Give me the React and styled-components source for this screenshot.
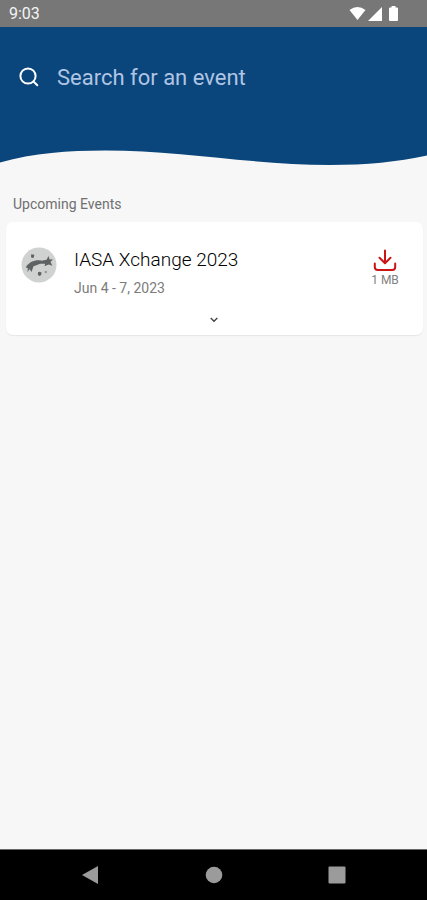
import React from "react";
import styled, { createGlobalStyle } from "styled-components";

const GlobalStyle = createGlobalStyle`
  *, *::before, *::after { box-sizing: border-box; }
  body {
    margin: 0;
    background: #f7f7f7;
    font-family: Roboto, "Liberation Sans", sans-serif;
  }
  button {
    font: inherit;
    border: 0;
    padding: 0;
    background: none;
    cursor: pointer;
  }
  svg { display: block; flex: none; }
`;

const Screen = styled.div`
  min-height: 100vh;
  display: flex;
  flex-direction: column;
`;

const StatusBar = styled.div`
  height: 27px;
  padding: 0 27px 0 9px;
  display: flex;
  align-items: center;
  justify-content: space-between;
  background: #777777;
  color: #f4f4f4;
  font-size: 16px;
  line-height: 27px;
`;

const StatusIcons = styled.div`
  display: flex;
  align-items: center;
  gap: 2px;
`;

const Header = styled.header`
  background: #0a467b;
`;

const SearchField = styled.label`
  height: 100px;
  padding: 0 19px;
  display: flex;
  align-items: center;
  gap: 18px;
  color: #ffffff;
`;

const SearchInput = styled.input`
  flex: 1;
  min-width: 0;
  height: 40px;
  padding: 0;
  border: 0;
  outline: 0;
  background: transparent;
  color: #ffffff;
  font-family: inherit;
  font-size: 22px;
  &::placeholder {
    color: #b0c5e4;
    opacity: 1;
  }
`;

const Wave = styled.svg`
  width: 100%;
  height: 42px;
`;

const Main = styled.main`
  flex: 1;
  padding: 26px 4px 20px 6px;
`;

const SectionTitle = styled.h2`
  margin: 0 0 9px;
  padding-left: 7px;
  color: #707070;
  font-size: 14px;
  font-weight: 400;
  line-height: 18px;
`;

const Card = styled.article`
  padding: 25px 17px 5px 15px;
  border-radius: 7px;
  background: #ffffff;
  box-shadow: 0 1px 1px #e6e6e6;
`;

const EventRow = styled.div`
  display: flex;
  align-items: flex-start;
  gap: 17px;
`;

const EventText = styled.div`
  flex: 1;
  min-width: 0;
  padding-top: 1px;
`;

const EventName = styled.h3`
  margin: 0 0 6px;
  color: #000000;
  font-size: 19px;
  font-weight: 300;
  line-height: 24px;
`;

const EventDate = styled.p`
  margin: 0;
  color: #7c7c7c;
  font-size: 14px;
  line-height: 20px;
`;

const DownloadButton = styled.button`
  width: 42px;
  padding-top: 1px;
  display: flex;
  flex-direction: column;
  align-items: center;
  gap: 1px;
  color: #808080;
  font-size: 12px;
  line-height: 14px;
`;

const ExpandButton = styled.button`
  width: 40px;
  height: 20px;
  margin: 12px auto 0;
  display: flex;
  align-items: center;
  justify-content: center;
`;

const NavBar = styled.nav`
  height: 51px;
  padding: 0 71px;
  display: flex;
  align-items: center;
  justify-content: space-between;
  background: #000000;
  border-top: 1px solid #686868;
`;

const NavButton = styled.button`
  width: 38px;
  height: 38px;
  display: flex;
  align-items: center;
  justify-content: center;
`;

function SearchIcon() {
  return (
    <svg width="20" height="20" viewBox="0 0 20 20" fill="none" stroke="currentColor" strokeWidth="2" strokeLinecap="round">
      <circle cx="9" cy="9" r="7.6" />
      <path d="M14.5 14.5 18.3 18.3" />
    </svg>
  );
}

function EventLogo() {
  return (
    <svg width="36" height="36" viewBox="0 0 36 36" aria-hidden="true">
      <circle cx="18" cy="18" r="17.5" fill="#d0d2d2" />
      <g fill="#5e6262">
        <path d="M4.800 20.500C7 15.500 13 13 18 13.200L26 14.300 25 17C20 16.200 17.500 17 15.500 18.200L12.500 19.300 10.500 25 8.500 22 6.500 25.300 6.800 21Z" />
        <path d="M27.500 9 28.600 12.500 32 12.300 29.500 15 31.400 18.800 27.600 17.400 23.500 19.300 24.400 15.800 21.800 13.400 25.600 12.800Z" />
        <path d="M10.200 7.300 13.300 7.700 12.900 10.400 11.500 11 10 10.200Z" />
        <path d="M17 25.300 18.600 24.800 20.500 25.400 20.200 28.100 18.700 29 16.900 28.100Z" />
      </g>
      <circle cx="24.800" cy="25" r="1.300" fill="#969a9a" />
    </svg>
  );
}

function DownloadIcon() {
  return (
    <svg width="24" height="24" viewBox="0 0 24 24" fill="none" stroke="#cb1515" strokeWidth="2" strokeLinecap="round" strokeLinejoin="round" aria-hidden="true">
      <path d="M12 2.5V15M6.5 9.8 12 15.3 17.5 9.8" />
      <path d="M1.800 15.500V19Q1.800 22 4.800 22H19.200Q22.200 22 22.200 19V15.500" />
    </svg>
  );
}

export default function App() {
  return (
    <>
      <GlobalStyle />
      <Screen>
        <StatusBar>
          <span>9:03</span>
          <StatusIcons>
            <svg width="17" height="15" viewBox="0 0 17 15" fill="#ffffff">
              <path d="M0.5 4Q8.5-2 16.5 4L8.5 14Z" />
            </svg>
            <svg width="14" height="14" viewBox="0 0 14 14" fill="#ffffff">
              <path d="M14 0V14H0Z" />
            </svg>
            <svg width="16" height="15" viewBox="0 0 16 15" fill="#ffffff">
              <path d="M6 1.500H7.500V0H11.500V1.500H13Q14 1.500 14 2.500V14Q14 15 13 15H6Q5 15 5 14V2.500Q5 1.500 6 1.500Z" />
            </svg>
          </StatusIcons>
        </StatusBar>
        <Header>
          <SearchField>
            <SearchIcon />
            <SearchInput type="text" aria-label="Search for an event" placeholder="Search for an event" />
          </SearchField>
          <Wave viewBox="0 0 427 42" preserveAspectRatio="none" aria-hidden="true">
            <path d="M0 35.500C34 26 68 23.500 105 23.500C180 23.500 255 38 330 38C367 38 397 35 427 28.500V42H0Z" fill="#f7f7f7" />
          </Wave>
        </Header>
        <Main>
          <SectionTitle>Upcoming Events</SectionTitle>
          <Card>
            <EventRow>
              <EventLogo />
              <EventText>
                <EventName>IASA Xchange 2023</EventName>
                <EventDate>Jun 4 - 7, 2023</EventDate>
              </EventText>
              <DownloadButton type="button">
                <DownloadIcon />
                1 MB
              </DownloadButton>
            </EventRow>
            <ExpandButton type="button" aria-label="Show details">
              <svg width="8" height="6" viewBox="0 0 8 6" fill="none" stroke="#444444" strokeWidth="1.4">
                <path d="M0.700 1 4 4.300 7.300 1" />
              </svg>
            </ExpandButton>
          </Card>
        </Main>
        <NavBar aria-label="System">
          <NavButton type="button" aria-label="Back">
            <svg width="18" height="20" viewBox="0 0 18 20" fill="#9b9b9b">
              <path d="M17 1V19L1 10Z" />
            </svg>
          </NavButton>
          <NavButton type="button" aria-label="Home">
            <svg width="18" height="18" viewBox="0 0 18 18" fill="#9b9b9b">
              <circle cx="9" cy="9" r="8.300" />
            </svg>
          </NavButton>
          <NavButton type="button" aria-label="Recent apps">
            <svg width="18" height="18" viewBox="0 0 18 18" fill="#9b9b9b">
              <rect x="0.500" y="0.500" width="17" height="17" rx="1" />
            </svg>
          </NavButton>
        </NavBar>
      </Screen>
    </>
  );
}
